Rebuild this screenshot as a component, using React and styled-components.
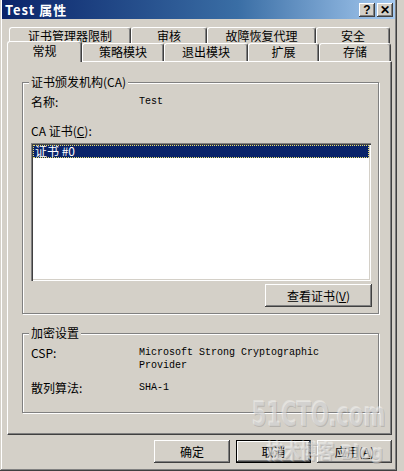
import React from 'react'
import styled, { createGlobalStyle } from 'styled-components'

const face = '#d4d0c8'
const cjk = `"Noto Sans CJK SC", "Liberation Sans", sans-serif`
const mono = `"Liberation Mono", "Noto Sans CJK SC", monospace`

const Global = createGlobalStyle`
    html, body { margin: 0; padding: 0; background: ${face}; }
    body { font-family: ${cjk}; font-size: 12px; color: #000; }
`

const Window = styled.div`
    position: relative;
    width: 397px;
    height: 471px;
    box-sizing: border-box;
    padding: 0 2px 2px 2px;
    background: ${face};
    box-shadow: inset -1px -1px 0 #404040, inset 1px 0 0 ${face}, inset -2px -2px 0 #808080, inset 2px 0 0 #fff;
    overflow: hidden;
`

const TitleBar = styled.div`
    height: 19px;
    display: flex;
    align-items: center;
    justify-content: space-between;
    padding: 0 2px 0 3px;
    background: linear-gradient(to right, #0a246a 0%, #3a6ea5 60%, #a6caf0 100%);
`

const Title = styled.span`
    color: #fff;
    font-weight: bold;
    font-size: 13px;
    letter-spacing: 1px;
`

const TitleButtons = styled.div`
    display: flex;
    gap: 2px;
`

const TitleBtn = styled.div`
    width: 16px;
    height: 14px;
    box-sizing: border-box;
    background: ${face};
    box-shadow: inset -1px -1px 0 #404040, inset 1px 1px 0 #fff, inset -2px -2px 0 #808080;
    display: flex;
    align-items: center;
    justify-content: center;
    font-family: "Liberation Sans", sans-serif;
    font-weight: bold;
    font-size: 12px;
    line-height: 1;
`

const Body = styled.div`
    padding: 8px 0 0 5px;
`

const TabStrip = styled.div`
    display: flex;
    flex-direction: column;
    width: 385px;
`

const TabRow = styled.div`
    display: flex;
    height: ${p => p.$h}px;
    margin-left: ${p => p.$offset}px;
    position: relative;
    z-index: ${p => p.$z};
`

const Tab = styled.div`
    width: ${p => p.$w}px;
    height: ${p => (p.$active ? 21 : p.$h)}px;
    margin-top: ${p => (p.$active ? -2 : 0)}px;
    box-sizing: border-box;
    flex-shrink: 0;
    background: ${face};
    border-top: 1px solid #fff;
    border-left: 1px solid #fff;
    border-right: 1px solid #404040;
    box-shadow: inset -1px 0 0 #808080;
    border-radius: 3px 3px 0 0;
    display: flex;
    justify-content: center;
    padding-top: ${p => (p.$active ? 2 : 1)}px;
    line-height: 14px;
    position: relative;
    z-index: ${p => (p.$active ? 3 : 1)};
`

const Panel = styled.div`
    width: 385px;
    height: 374px;
    box-sizing: border-box;
    border-top: 1px solid #fff;
    border-left: 1px solid #fff;
    border-right: 1px solid #404040;
    border-bottom: 1px solid #404040;
    box-shadow: inset -1px -1px 0 #808080;
    padding: 20px 0 0 14px;
    display: flex;
    flex-direction: column;
    gap: 19px;
`

const Group = styled.div`
    position: relative;
    width: 357px;
    height: ${p => p.$h}px;
    box-sizing: border-box;
    border: 1px solid #808080;
    box-shadow: inset 1px 1px 0 #fff, 1px 1px 0 #fff;
    padding: 12px 0 0 8px;
    display: flex;
    flex-direction: column;
`

const Legend = styled.span`
    position: absolute;
    top: -8px;
    left: 6px;
    padding: 0 2px 0 2px;
    background: ${face};
    line-height: 14px;
`

const Field = styled.div`
    display: grid;
    grid-template-columns: 108px 1fr;
    line-height: 13px;
    margin-top: ${p => p.$mt || 0}px;
`

const Value = styled.span`
    font-family: ${mono};
    font-size: 10px;
    line-height: 13px;
    white-space: pre;
`

const Caption = styled.div`
    line-height: 13px;
    margin-top: 16px;
`

const ListBox = styled.div`
    width: 340px;
    height: 138px;
    margin-top: 6px;
    box-sizing: border-box;
    background: #fff;
    box-shadow: inset 1px 1px 0 #808080, inset 2px 2px 0 #404040, inset -1px -1px 0 #fff, inset -2px -2px 0 ${face};
    padding: 2px;
`

const ListItem = styled.div`
    height: 13px;
    box-sizing: border-box;
    line-height: 11px;
    padding-left: 2px;
    background: ${p => (p.$selected ? '#0a246a' : 'transparent')};
    color: ${p => (p.$selected ? '#fff' : '#000')};
    outline: 1px dotted #e8e070;
    outline-offset: -1px;
`

const Button = styled.div`
    width: ${p => p.$w}px;
    height: 23px;
    box-sizing: border-box;
    background: ${face};
    border: ${p => (p.$default ? '1px solid #000' : 'none')};
    box-shadow: inset -1px -1px 0 #404040, inset 1px 1px 0 #fff, inset -2px -2px 0 #808080;
    display: flex;
    align-items: center;
    justify-content: center;
    line-height: 1;
`

const ButtonRow = styled.div`
    display: flex;
    justify-content: flex-end;
    width: 341px;
    margin-top: 3px;
`

const Footer = styled.div`
    display: flex;
    justify-content: flex-end;
    gap: 6px;
    padding-top: 5px;
    width: 385px;
`

const Watermark = styled.div`
    position: absolute;
    right: ${p => p.$right}px;
    bottom: ${p => p.$bottom}px;
    font-family: "DejaVu Sans", "Noto Sans CJK SC", sans-serif;
    font-weight: bold;
    font-size: ${p => p.$size}px;
    line-height: 1;
    transform: scaleX(${p => p.$sx});
    transform-origin: right bottom;
    color: rgba(235, 235, 235, 0.45);
    text-shadow: 1px 1px 0 rgba(140, 140, 140, 0.4), -1px -1px 0 rgba(255, 255, 255, 0.35);
    pointer-events: none;
    z-index: 5;
`

const Key = ({ k }) => <>(<u>{k}</u>)</>

const row1 = [['证书管理器限制', 122], ['审核', 76], ['故障恢复代理', 109], ['安全', 74]]
const row2 = [['常规', 75, true], ['策略模块', 82], ['退出模块', 84], ['扩展', 71], ['存储', 72]]

export default function App() {
    return <>
        <Global />
        <Window>
            <TitleBar>
                <Title>Test 属性</Title>
                <TitleButtons>
                    <TitleBtn>?</TitleBtn>
                    <TitleBtn>✕</TitleBtn>
                </TitleButtons>
            </TitleBar>
            <Body>
                <TabStrip>
                    <TabRow $offset={2} $h={16} $z={1}>
                        {row1.map(([t, w]) => <Tab key={t} $w={w} $h={17}>{t}</Tab>)}
                    </TabRow>
                    <TabRow $offset={0} $h={18} $z={2}>
                        {row2.map(([t, w, a]) => <Tab key={t} $w={w} $h={18} $active={a}>{t}</Tab>)}
                    </TabRow>
                </TabStrip>
                <Panel>
                    <Group $h={232}>
                        <Legend>证书颁发机构(CA)</Legend>
                        <Field><span>名称:</span><Value>Test</Value></Field>
                        <Caption>CA 证书<Key k="C" />:</Caption>
                        <ListBox>
                            <ListItem $selected>证书 #0</ListItem>
                        </ListBox>
                        <ButtonRow>
                            <Button $w={107}>查看证书<Key k="V" /></Button>
                        </ButtonRow>
                    </Group>
                    <Group $h={80}>
                        <Legend>加密设置</Legend>
                        <Field><span>CSP:</span><Value>{'Microsoft Strong Cryptographic\nProvider'}</Value></Field>
                        <Field $mt={9}><span>散列算法:</span><Value>SHA-1</Value></Field>
                    </Group>
                </Panel>
                <Footer>
                    <Button $w={76}>确定</Button>
                    <Button $w={75} $default>取消</Button>
                    <Button $w={75}>应用<Key k="A" /></Button>
                </Footer>
            </Body>
            <Watermark $right={12} $bottom={40} $size={34} $sx={0.62}>51CTO.com</Watermark>
            <Watermark $right={14} $bottom={9} $size={20} $sx={0.85}>技术博客 Blog</Watermark>
        </Window>
    </>
}
